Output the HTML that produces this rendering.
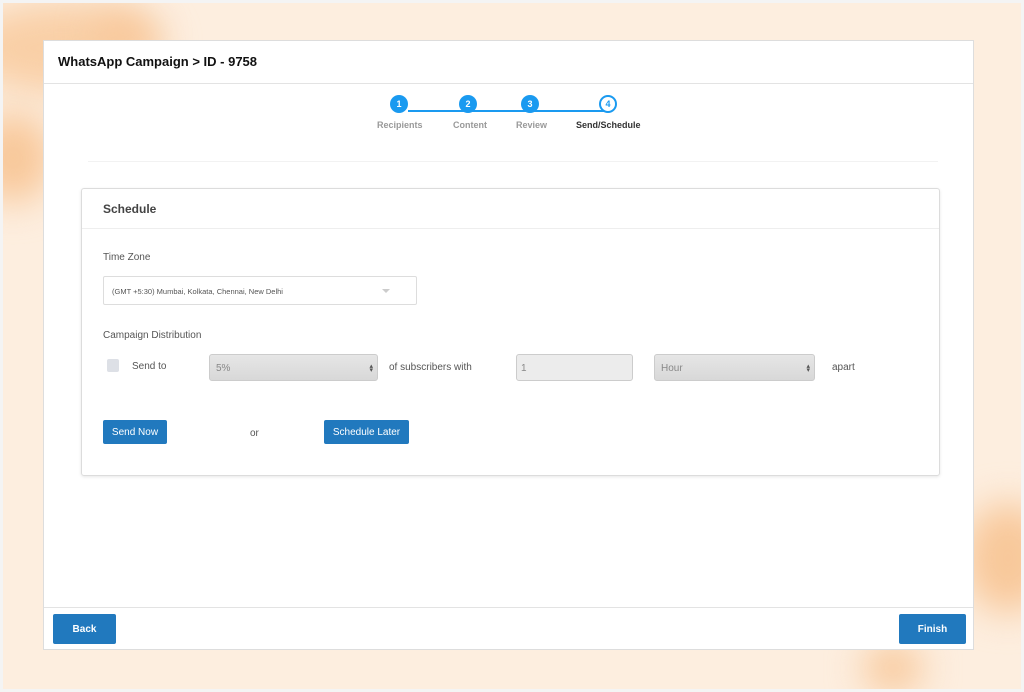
<!DOCTYPE html><html><head><style>
*{box-sizing:border-box;margin:0;padding:0}
body{width:1024px;height:692px;overflow:hidden;font-family:"Liberation Sans",sans-serif;background:#f4f4f4;position:relative}
.bg{position:absolute;left:3px;top:3px;width:1018px;height:686px;background:#fdeedf;overflow:hidden}
.blob{position:absolute;border-radius:50%;filter:blur(18px)}
.page{position:absolute;left:43px;top:40px;width:931px;height:610px;background:#fff;border:1px solid #ddd}
.hdr{height:43px;border-bottom:1px solid #e3e3e3;padding:13px 14px;font-weight:bold;font-size:13px;color:#111}
.step{position:absolute;top:54px;width:18px;height:18px;border-radius:50%;background:#1a9af0;color:#fff;font-size:9px;font-weight:bold;text-align:center;line-height:18px}
.sl{position:absolute;top:79px;font-size:9px;font-weight:bold;color:#999}
.card{position:absolute;left:37px;top:147px;width:859px;height:288px;border:1px solid #dcdcdc;border-radius:3px;box-shadow:0 1px 3px rgba(0,0,0,.1)}
.lbl{position:absolute;font-size:10px;color:#555}
.btn{position:absolute;background:#2179be;color:#fff;font-size:10px;text-align:center;border-radius:2px}
.sel{position:absolute;top:165px;height:27px;border:1px solid #ccc;border-radius:3px;background:linear-gradient(#e6e6e6,#d8d8d8);font-size:10px;color:#888;padding:8px 6px}
</style></head><body>
<div class="bg">
<div class="blob" style="left:-40px;top:0;width:200px;height:90px;background:#f9cfa6"></div>
<div class="blob" style="left:-30px;top:110px;width:80px;height:90px;background:#f8c89a"></div>
<div class="blob" style="left:90px;top:10px;width:60px;height:40px;background:#f8c698"></div>
<div class="blob" style="left:960px;top:500px;width:90px;height:110px;background:#f8c89a"></div>
<div class="blob" style="left:860px;top:640px;width:60px;height:50px;background:#f8c99c"></div>
</div>
<div class="page">
<div class="hdr">WhatsApp Campaign &gt; ID - 9758</div>
<div style="position:absolute;left:364px;top:69px;width:200px;height:2px;background:#1a9af0"></div>
<div class="step" style="left:346px">1</div>
<div class="step" style="left:415px">2</div>
<div class="step" style="left:477px">3</div>
<div class="step" style="left:555px;background:#fff;border:2px solid #1a9af0;color:#1a9af0;line-height:14px">4</div>
<div class="sl" style="left:333px">Recipients</div>
<div class="sl" style="left:409px">Content</div>
<div class="sl" style="left:472px">Review</div>
<div class="sl" style="left:532px;color:#333">Send/Schedule</div>
<div style="position:absolute;left:44px;top:120px;width:850px;height:1px;background:#f2f2f2"></div>
<div class="card">
<div style="height:40px;border-bottom:1px solid #eee;padding:13px 21px;font-size:12px;font-weight:bold;color:#444">Schedule</div>
<div class="lbl" style="left:21px;top:63px">Time Zone</div>
<div style="position:absolute;left:21px;top:87px;width:314px;height:29px;border:1px solid #ddd;border-radius:2px;font-size:7.5px;color:#555;padding:10px 8px">(GMT +5:30) Mumbai, Kolkata, Chennai, New Delhi
<span style="position:absolute;right:26px;top:12px;border:4px solid transparent;border-top:4px solid #ccc"></span></div>
<div class="lbl" style="left:21px;top:141px">Campaign Distribution</div>
<div style="position:absolute;left:25px;top:170px;width:12px;height:13px;background:#dde0e6;border-radius:2px"></div>
<div class="lbl" style="left:50px;top:172px">Send to</div>
<div class="sel" style="left:127px;width:169px">5%<span style="position:absolute;right:4px;top:7px;font-size:7px;color:#555">▴</span><span style="position:absolute;right:4px;top:11px;font-size:7px;color:#555">▾</span></div>
<div class="lbl" style="left:307px;top:173px">of subscribers with</div>
<div style="position:absolute;left:434px;top:165px;width:117px;height:27px;border:1px solid #ccc;border-radius:3px;background:#ececec;font-size:10px;color:#888;padding:8px 4px">1</div>
<div class="sel" style="left:572px;width:161px">Hour<span style="position:absolute;right:4px;top:7px;font-size:7px;color:#555">▴</span><span style="position:absolute;right:4px;top:11px;font-size:7px;color:#555">▾</span></div>
<div class="lbl" style="left:750px;top:173px">apart</div>
<div class="btn" style="left:21px;top:231px;width:64px;height:24px;line-height:25px">Send Now</div>
<div class="lbl" style="left:168px;top:239px">or</div>
<div class="btn" style="left:242px;top:231px;width:85px;height:24px;line-height:25px">Schedule Later</div>
</div>
<div style="position:absolute;left:0;top:566px;width:929px;height:1px;background:#e3e3e3"></div>
<div class="btn" style="left:9px;top:573px;width:63px;height:30px;line-height:31px;font-weight:bold">Back</div>
<div class="btn" style="left:855px;top:573px;width:67px;height:30px;line-height:31px;font-weight:bold">Finish</div>
</div>
</body></html>
